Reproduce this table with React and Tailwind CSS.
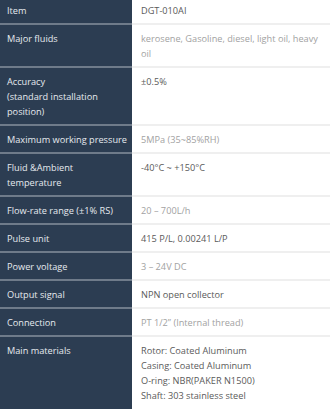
const SPECS = [
  { label: 'Item', value: ['DGT-010AI'] },
  { label: 'Major fluids', value: ['kerosene, Gasoline, diesel, light oil, heavy oil'] },
  { label: 'Accuracy\n(standard installation position)', value: ['±0.5%'] },
  { label: 'Maximum working pressure', value: ['5MPa (35~85%RH)'] },
  { label: 'Fluid &Ambient\ntemperature', value: ['-40°C ~ +150°C'] },
  { label: 'Flow-rate range (±1% RS)', value: ['20 – 700L/h'] },
  { label: 'Pulse unit', value: ['415 P/L, 0.00241 L/P'] },
  { label: 'Power voltage', value: ['3 – 24V DC'] },
  { label: 'Output signal', value: ['NPN open collector'] },
  { label: 'Connection', value: ['PT 1/2” (Internal thread)'] },
  {
    label: 'Main materials',
    value: ['Rotor: Coated Aluminum', 'Casing: Coated Aluminum', 'O-ring: NBR(PAKER N1500)', 'Shaft: 303 stainless steel'],
  },
]

export default function App() {
  return (
    <div
      className="w-[330px] h-[409px] overflow-hidden bg-white text-[9.2px] leading-[15px]"
      style={{ fontFamily: '"Open Sans", "Noto Sans", sans-serif' }}
    >
      {SPECS.map((row, i) => {
        const first = i === 0
        const last = i === SPECS.length - 1
        const muted = i % 2 === 1
        return (
          <div key={row.label} className={`flex ${last ? 'min-h-[80px]' : ''}`}>
            <div
              className={`w-[132px] shrink-0 bg-[#2c3d52] text-[#e6eaef] pl-[7px] pr-1 whitespace-pre-line ${first ? 'pt-[3px]' : 'pt-[6px]'} pb-[5px] ${last ? '' : 'border-b-2 border-[#6f7b8a]'}`}
            >
              {row.label}
            </div>
            <div
              className={`flex-1 pl-[9px] pr-[9px] ${first ? 'pt-[3px]' : 'pt-[6px]'} pb-[5px] ${muted ? 'text-[#a2a2a2]' : 'text-[#5a5a5a]'} ${last ? '' : 'border-b-2 border-[#efefef]'}`}
            >
              {row.value.map((line) => (
                <div key={line}>{line}</div>
              ))}
            </div>
          </div>
        )
      })}
    </div>
  )
}
